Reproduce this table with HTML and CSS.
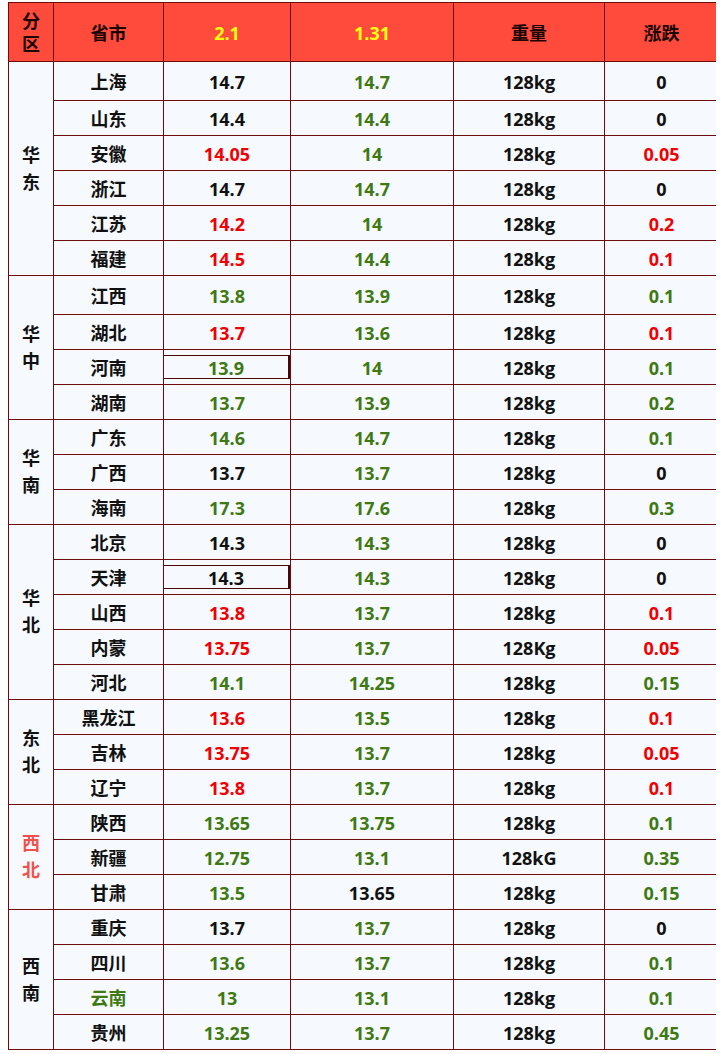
FILE: index.html
```html
<!DOCTYPE html>
<html lang="zh-CN">
<head>
<meta charset="utf-8">
<title>生猪价格</title>
<link rel="stylesheet" href="styles.css">
</head>
<body>
<table class="price">
  <colgroup>
    <col class="c-region">
    <col class="c-prov">
    <col class="c-d1">
    <col class="c-d2">
    <col class="c-wt">
    <col class="c-chg">
  </colgroup>
  <thead>
    <tr class="head">
      <th class="region-h">分<br>区</th>
      <th>省市</th>
      <th class="yellow">2.1</th>
      <th class="yellow">1.31</th>
      <th>重量</th>
      <th>涨跌</th>
    </tr>
  </thead>
  <tbody>
    <tr class="tall"><td class="region" rowspan="6">华<br>东</td><td>上海</td><td>14.7</td><td class="g">14.7</td><td>128kg</td><td>0</td></tr>
    <tr><td>山东</td><td>14.4</td><td class="g">14.4</td><td>128kg</td><td>0</td></tr>
    <tr><td>安徽</td><td class="r">14.05</td><td class="g">14</td><td>128kg</td><td class="r">0.05</td></tr>
    <tr><td>浙江</td><td>14.7</td><td class="g">14.7</td><td>128kg</td><td>0</td></tr>
    <tr><td>江苏</td><td class="r">14.2</td><td class="g">14</td><td>128kg</td><td class="r">0.2</td></tr>
    <tr><td>福建</td><td class="r">14.5</td><td class="g">14.4</td><td>128kg</td><td class="r">0.1</td></tr>

    <tr class="tall"><td class="region" rowspan="4">华<br>中</td><td>江西</td><td class="g">13.8</td><td class="g">13.9</td><td>128kg</td><td class="g">0.1</td></tr>
    <tr><td>湖北</td><td class="r">13.7</td><td class="g">13.6</td><td>128kg</td><td class="r">0.1</td></tr>
    <tr><td>河南</td><td class="boxed g"><div class="box">13.9</div></td><td class="g">14</td><td>128kg</td><td class="g">0.1</td></tr>
    <tr><td>湖南</td><td class="g">13.7</td><td class="g">13.9</td><td>128kg</td><td class="g">0.2</td></tr>

    <tr><td class="region" rowspan="3">华<br>南</td><td>广东</td><td class="g">14.6</td><td class="g">14.7</td><td>128kg</td><td class="g">0.1</td></tr>
    <tr><td>广西</td><td>13.7</td><td class="g">13.7</td><td>128kg</td><td>0</td></tr>
    <tr><td>海南</td><td class="g">17.3</td><td class="g">17.6</td><td>128kg</td><td class="g">0.3</td></tr>

    <tr><td class="region" rowspan="5">华<br>北</td><td>北京</td><td>14.3</td><td class="g">14.3</td><td>128kg</td><td>0</td></tr>
    <tr><td>天津</td><td class="boxed"><div class="box">14.3</div></td><td class="g">14.3</td><td>128kg</td><td>0</td></tr>
    <tr><td>山西</td><td class="r">13.8</td><td class="g">13.7</td><td>128kg</td><td class="r">0.1</td></tr>
    <tr><td>内蒙</td><td class="r">13.75</td><td class="g">13.7</td><td>128Kg</td><td class="r">0.05</td></tr>
    <tr><td>河北</td><td class="g">14.1</td><td class="g">14.25</td><td>128kg</td><td class="g">0.15</td></tr>

    <tr><td class="region" rowspan="3">东<br>北</td><td>黑龙江</td><td class="r">13.6</td><td class="g">13.5</td><td>128kg</td><td class="r">0.1</td></tr>
    <tr><td>吉林</td><td class="r">13.75</td><td class="g">13.7</td><td>128kg</td><td class="r">0.05</td></tr>
    <tr><td>辽宁</td><td class="r">13.8</td><td class="g">13.7</td><td>128kg</td><td class="r">0.1</td></tr>

    <tr><td class="region salmon" rowspan="3">西<br>北</td><td>陕西</td><td class="g">13.65</td><td class="g">13.75</td><td>128kg</td><td class="g">0.1</td></tr>
    <tr><td>新疆</td><td class="g">12.75</td><td class="g">13.1</td><td>128kG</td><td class="g">0.35</td></tr>
    <tr><td>甘肃</td><td class="g">13.5</td><td>13.65</td><td>128kg</td><td class="g">0.15</td></tr>

    <tr><td class="region" rowspan="4">西<br>南</td><td>重庆</td><td>13.7</td><td class="g">13.7</td><td>128kg</td><td>0</td></tr>
    <tr><td>四川</td><td class="g">13.6</td><td class="g">13.7</td><td>128kg</td><td class="g">0.1</td></tr>
    <tr><td class="g">云南</td><td class="g">13</td><td class="g">13.1</td><td>128kg</td><td class="g">0.1</td></tr>
    <tr><td>贵州</td><td class="g">13.25</td><td class="g">13.7</td><td>128kg</td><td class="g">0.45</td></tr>
  </tbody>
</table>
</body>
</html>
```

FILE: styles.css
```css
html, body {
  background: #ffffff;
}
body {
  margin: 2px 8px 0 8px;
  font-family: "Open Sans", "Noto Sans CJK SC", sans-serif;
  font-weight: 700;
  font-size: 18px;
  color: #111111;
}
.price {
  border-collapse: collapse;
  table-layout: fixed;
  width: 710px;
}
.c-region { width: 45px; }
.c-prov { width: 110px; }
.c-d1 { width: 127px; }
.c-d2 { width: 163px; }
.c-wt { width: 151px; }
.c-chg { width: 114px; }

.price th,
.price td {
  border: 1px solid #6e0b0b;
  text-align: center;
  vertical-align: middle;
  padding: 2px 0 0 0;
  line-height: 22px;
}
.price th {
  background: #ff4b3b;
  color: #1a0505;
  font-weight: 700;
}
.head { height: 59px; }
.price th.region-h { line-height: 23px; }
.price th.yellow { color: #ffff10; }

.price td {
  background: #f6f9fe;
}
.price tbody tr { height: 35px; }
.price tbody tr.tall { height: 39px; }

.price td.region { line-height: 27px; padding: 0; }
.salmon { color: #f2504c; }
.g { color: #3f7912; }
.r { color: #f00000; }

.price td.boxed { padding: 0; }
.box {
  height: 22px;
  line-height: 24px;
  border: 1px solid #4a0606;
  border-right-width: 2px;
  margin: 0 0 0 -1px;
}
```
